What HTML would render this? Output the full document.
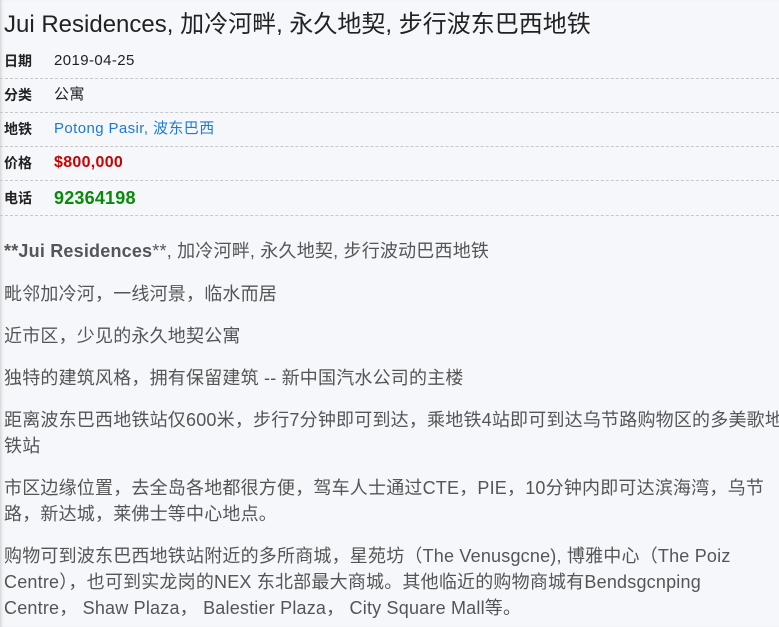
<!DOCTYPE html>
<html><head><meta charset="utf-8"><style>
html,body{margin:0;padding:0;width:779px;height:627px;overflow:hidden;background:#f5f7fb;}
body{font-family:"Liberation Sans","Noto Sans CJK SC",sans-serif;position:relative;box-shadow:inset 3px 0 3px -2px #ccc;}
h1{position:absolute;left:4px;top:9px;margin:0;font-weight:normal;font-size:24px;color:#222;white-space:nowrap;line-height:32px;}
.row{position:absolute;left:0;width:779px;height:34px;border-bottom:1px dashed #c8c8c8;}
.row b{position:absolute;left:4px;font-size:14px;color:#222;top:0;line-height:34px;}
.row span{position:absolute;left:54px;font-size:15px;color:#222;line-height:34px;top:0;letter-spacing:0.4px;}
.p{position:absolute;left:4px;font-size:18px;color:#555;line-height:26px;white-space:nowrap;letter-spacing:0.2px;}
</style></head><body>
<h1>Jui Residences, 加冷河畔, 永久地契, 步行波东巴西地铁</h1>
<div class="row" style="top:44px"><b>日期</b><span>2019-04-25</span></div>
<div class="row" style="top:78px"><b>分类</b><span>公寓</span></div>
<div class="row" style="top:112px"><b>地铁</b><span style="color:#1e7ad6">Potong Pasir, 波东巴西</span></div>
<div class="row" style="top:146px"><b>价格</b><span style="color:#c00;font-weight:bold;font-size:16px;letter-spacing:0.3px">$800,000</span></div>
<div class="row" style="top:181px"><b>电话</b><span style="color:#0a8a0a;font-weight:bold;font-size:18px;letter-spacing:0.2px">92364198</span></div>
<div class="p" style="top:238px"><b>**Jui Residences</b>**, 加冷河畔, 永久地契, 步行波动巴西地铁</div>
<div class="p" style="top:281px">毗邻加冷河，一线河景，临水而居</div>
<div class="p" style="top:323px">近市区，少见的永久地契公寓</div>
<div class="p" style="top:365px">独特的建筑风格，拥有保留建筑 -- 新中国汽水公司的主楼</div>
<div class="p" style="top:407px">距离波东巴西地铁站仅600米，步行7分钟即可到达，乘地铁4站即可到达乌节路购物区的多美歌地<br>铁站</div>
<div class="p" style="top:475px">市区边缘位置，去全岛各地都很方便，驾车人士通过CTE，PIE，10分钟内即可达滨海湾，乌节<br>路，新达城，莱佛士等中心地点。</div>
<div class="p" style="top:543px">购物可到波东巴西地铁站附近的多所商城，星苑坊（The Venusgcne), 博雅中心（The Poiz<br>Centre），也可到实龙岗的NEX 东北部最大商城。其他临近的购物商城有Bendsgcnping<br>Centre， Shaw Plaza， Balestier Plaza， City Square Mall等。</div>
</body></html>
